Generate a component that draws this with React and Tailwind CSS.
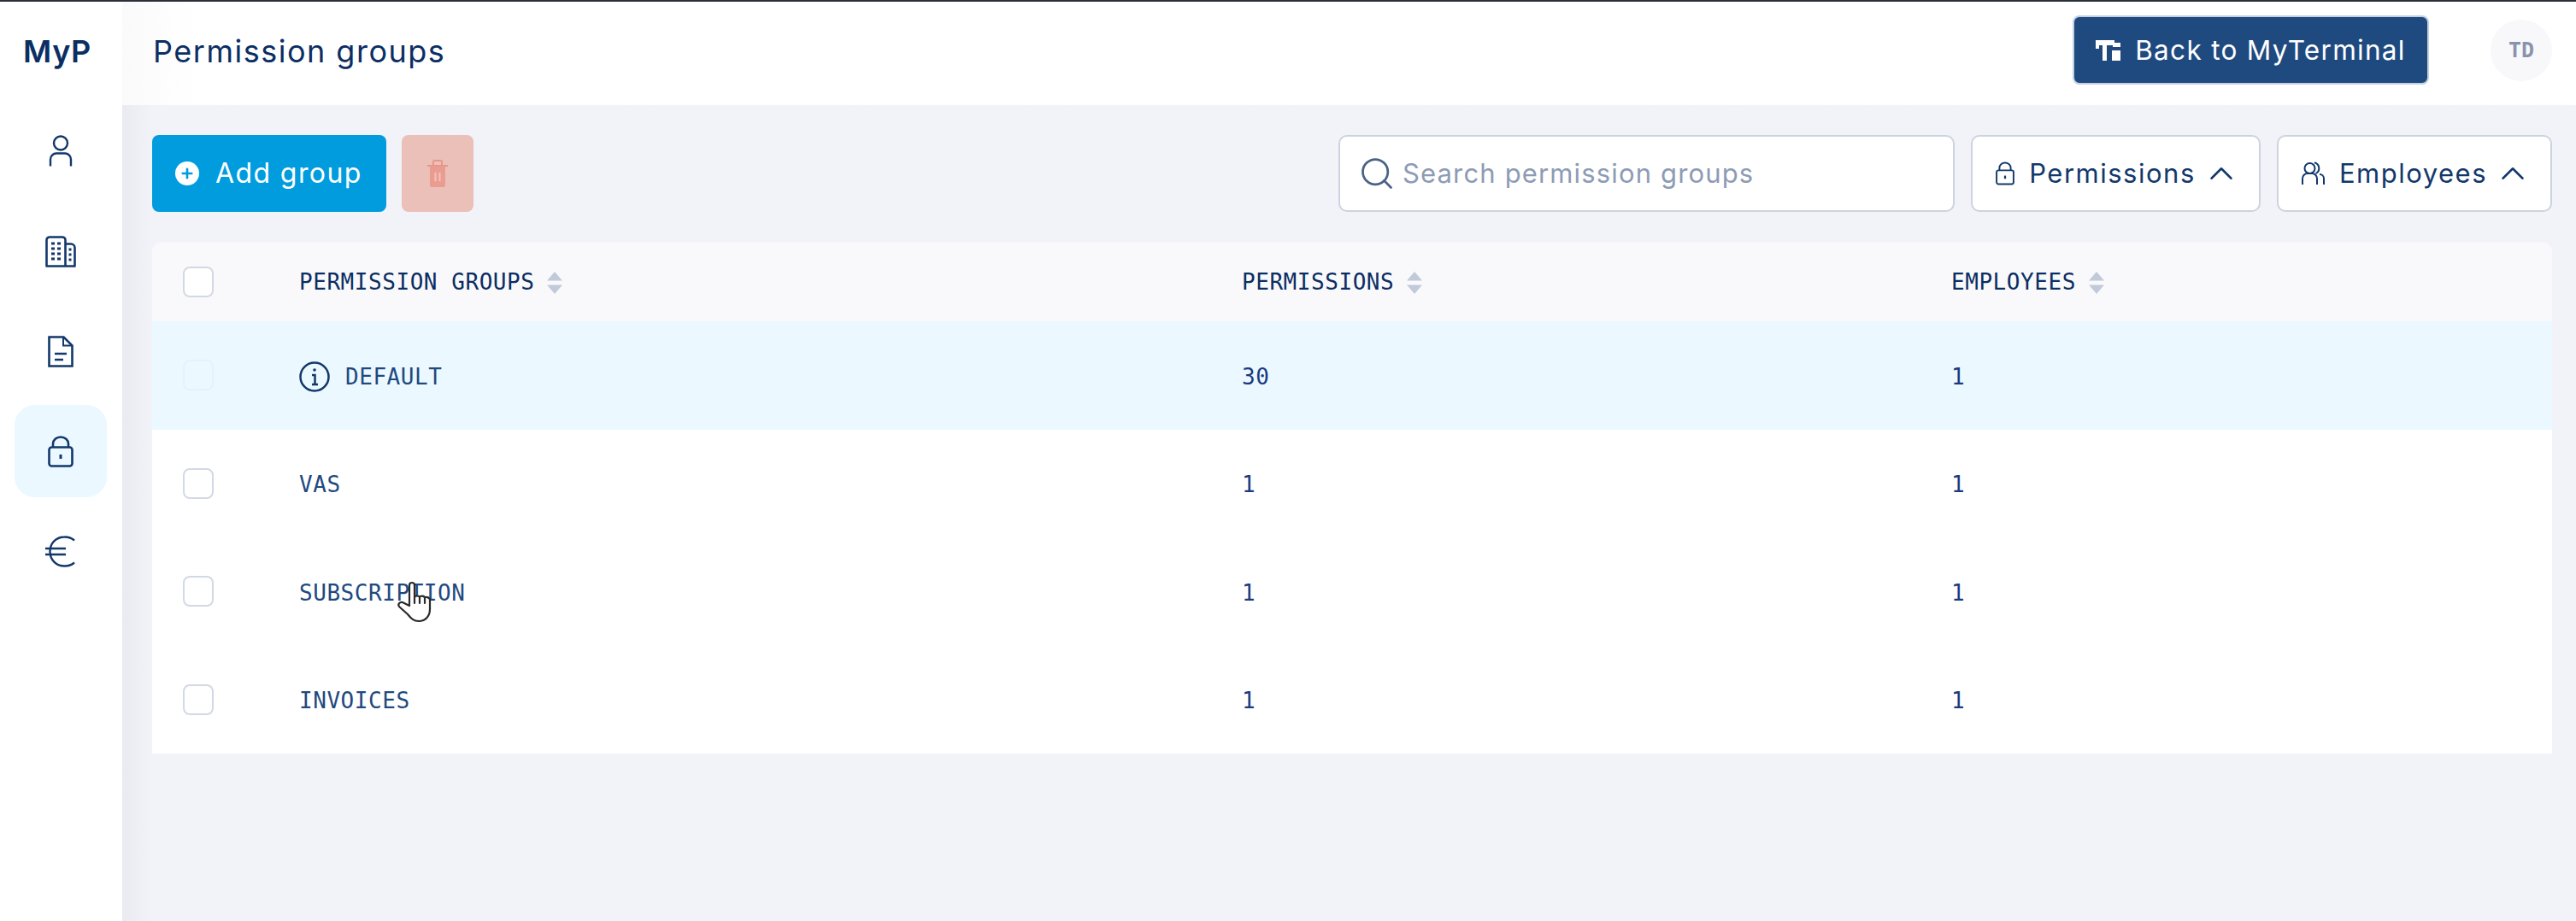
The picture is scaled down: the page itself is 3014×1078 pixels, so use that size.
import React from "react";
import { Search, ChevronUp, Plus } from "lucide-react";

const Sans = "font-['Inter','Noto_Sans',sans-serif]";
const Mono = "font-['DejaVu_Sans_Mono','Liberation_Mono',monospace]";

const S = { fill: "none", stroke: "currentColor" };

const UserIcon = () => (
  <svg width="28" height="38" viewBox="0 0 28 38" {...S} strokeWidth="2.400">
    <circle cx="14" cy="9.500" r="8" />
    <path d="M2 36.500v-8a7 7 0 0 1 7-7h10a7 7 0 0 1 7 7v8" />
  </svg>
);
const BuildingIcon = () => (
  <svg width="36" height="37" viewBox="0 0 36 37" {...S} strokeWidth="2.600">
    <path d="M1.500 35.500V5a3.500 3.500 0 0 1 3.500-3.500h15a3.500 3.500 0 0 1 3.500 3.500v30.500M23.500 9.500H30a4.500 4.500 0 0 1 4.500 4.500v21.500M0.500 35.500h35" />
    <path d="M7 9h4M14 9h4M7 15h4M14 15h4M7 21h4M14 21h4M7 27h4M14 27h4M27.500 16h3M27.500 22h3M27.500 28h3" strokeWidth="3" />
  </svg>
);
const DocIcon = () => (
  <svg width="30" height="37" viewBox="0 0 30 37" {...S} strokeWidth="2.600">
    <path d="M1.500 1.500h17l10 10v24h-27z" />
    <path d="M18 1.500v10h10" strokeWidth="2" />
    <path d="M8 21h14M8 28h10" />
  </svg>
);
const LockIcon = ({ w = 30, h = 37, sw = 2.600 }) => (
  <svg width={w} height={h} viewBox="0 0 30 37" {...S} strokeWidth={sw}>
    <rect x="1.500" y="13.500" width="27" height="22" rx="3" />
    <path d="M6 13.500V9.500a9 8 0 0 1 18 0v4" />
    <path d="M15 22v5" strokeWidth="3" />
  </svg>
);
const EuroIcon = () => (
  <svg width="36" height="37" viewBox="0 0 36 37" {...S} strokeWidth="2.400">
    <path d="M34 5.500A17 17 0 0 0 22.500 1.500C12.500 1.500 5.500 9 5.500 18.500S12.500 35.500 22.500 35.500A17 17 0 0 0 34 31.500" />
    <path d="M0 15h24M0 22h24" />
  </svg>
);
const PeopleIcon = () => (
  <svg width="27" height="28" viewBox="0 0 27 28" {...S} strokeWidth="2">
    <circle cx="9.500" cy="8" r="6" />
    <path d="M15 1.200a7 7 0 0 1 1.500 13" />
    <path d="M1 27v-7a6 6 0 0 1 6-6h5a6 6 0 0 1 6 6v7M21 15a5 5 0 0 1 5 5v7" />
  </svg>
);
const TerminalLogo = () => (
  <svg width="29" height="27" viewBox="0 0 29 27" fill="currentColor">
    <path d="M0 2h22v6h-9v18H8V8H4v4H0z" />
    <path d="M20 5h9v5h-9zM19 14h10v12H19z" />
  </svg>
);
const TrashIcon = () => (
  <svg width="24" height="32" viewBox="0 0 24 32">
    <path d="M7 6V2.500A1.500 1.500 0 0 1 8.500 1h7A1.500 1.500 0 0 1 17 2.500V6" fill="none" stroke="#e8968a" strokeWidth="2" />
    <path d="M0 6h24v2H0z" fill="#e8968a" />
    <path d="M3 8h18v22a2 2 0 0 1-2 2H5a2 2 0 0 1-2-2z" fill="#ea9c90" />
    <path d="M9.500 15v10M14.500 15v10" stroke="#f3c4ba" strokeWidth="2" />
  </svg>
);
const InfoIcon = () => (
  <svg width="36" height="36" viewBox="0 0 36 36" fill="none" stroke="#12386b" strokeWidth="2.500">
    <circle cx="18" cy="18" r="16.500" />
    <path d="M15 16h3.500v11M15 27h7" />
    <circle cx="18" cy="10" r="1.800" fill="#12386b" stroke="none" />
  </svg>
);
const SortArrows = () => (
  <svg width="18" height="26" viewBox="0 0 18 26" fill="#c0cad8" className="shrink-0">
    <path d="M9 0l9 10.500H0zM0 15.500h18L9 26z" />
  </svg>
);
const HandCursor = () => (
  <svg width="42" height="50" viewBox="0 0 42 50" fill="#fff" stroke="#2a2a2a" strokeWidth="2.200" strokeLinejoin="round" strokeLinecap="round">
    <path d="M16 30V6a3 3 0 0 1 6 0v14c0-2 6-2 6 0 0-2 6-2 6 1 0-2 6-1 6 2v11c0 8-5 14-13 14-6 0-9-3-13-8l-10-9c-2-3 1-6 4-5z" />
    <path d="M22 20v7M28 20v7M34 21v6" fill="none" />
  </svg>
);

const NavItem = ({ active, children }) => (
  <div className={`w-[108px] h-[108px] rounded-[24px] flex items-center justify-center text-[#12386b] ${active ? "bg-[#ebf8ff]" : ""}`}>
    {children}
  </div>
);

const Pill = ({ w, icon, label }) => (
  <div className={`${w} h-[90px] bg-white border-2 border-[#ccd3e0] rounded-[10px] flex items-center justify-center gap-[11px] text-[#12386b]`}>
    {icon}
    <span className="text-[31px] tracking-[1.500px] pl-[6px] pr-[2px]">{label}</span>
    <ChevronUp size={46} strokeWidth={1.300} className="text-[#12386b] -mx-[6px]" />
  </div>
);

const cols = "grid grid-cols-[172px_1103px_830px_1fr] items-center";

const Check = ({ faint }) => (
  <div className={`ml-[36px] w-[36px] h-[36px] rounded-[8px] border-2 ${faint ? "border-[#e4f2f9] bg-[#ebf8ff]" : "border-[#d3d9e4] bg-white"}`} />
);

const Row = ({ name, perms, bg = "bg-white", faint, icon, cursor }) => (
  <div className={`${cols} h-[126.500px] ${bg} ${Mono} text-[26px] tracking-[0.550px] text-[#1f4a80]`}>
    <Check faint={faint} />
    <div className="flex items-center gap-[18px] relative pt-[4px]">
      {icon}
      <span>{name}</span>
      {cursor && <div className="absolute left-[113px] top-[8px]"><HandCursor /></div>}
    </div>
    <span className="text-[#1a3b80] pt-[4px]">{perms}</span>
    <span className="text-[#1a3b80] pt-[4px]">1</span>
  </div>
);

const Th = ({ label }) => (
  <div className="flex items-center gap-[15px] pt-[2px]">
    <span>{label}</span>
    <SortArrows />
  </div>
);

export default function App() {
  return (
    <div className={`w-[3014px] h-[1078px] flex flex-col overflow-hidden bg-white border-t-2 border-[#2b3036] ${Sans}`}>
      <div className="flex flex-1 min-h-0">
        <aside className="w-[143px] shrink-0 bg-white flex flex-col items-center pr-[2px]">
          <div className="h-[119px] pb-[4px] pr-[7px] flex items-center text-[36px] font-semibold text-[#0b2e63] tracking-[0.600px]">MyP</div>
          <div className="flex flex-col items-center gap-[9px] mt-[2px]">
            <NavItem><UserIcon /></NavItem>
            <NavItem><BuildingIcon /></NavItem>
            <NavItem><DocIcon /></NavItem>
            <NavItem active><LockIcon /></NavItem>
            <NavItem><EuroIcon /></NavItem>
          </div>
        </aside>
        <main className="flex-1 flex flex-col min-w-0">
          <header className="h-[121px] shrink-0 bg-gradient-to-r from-[#fafafa] via-white via-[3%] to-white flex items-center pl-[36px] pr-[28px] pb-[8px]">
            <h1 className="text-[36px] font-normal text-[#0b2e63] tracking-[1.500px] pt-[2px]">Permission groups</h1>
            <div className="ml-auto flex items-center gap-[72px]">
              <button className="w-[417px] h-[81px] rounded-[8px] bg-[#1f4a80] border-2 border-[#c3d0e0] text-white flex items-center justify-center gap-[17px]">
                <TerminalLogo />
                <span className="text-[31.500px] tracking-[1.300px]">Back to MyTerminal</span>
              </button>
              <div className={`w-[72px] h-[72px] rounded-full bg-[#f8f8fb] flex items-center justify-center text-[#8a93ad] font-bold text-[25px] ${Mono}`}>TD</div>
            </div>
          </header>
          <div className="flex-1 bg-gradient-to-r from-[#e9ebf0] to-[#f1f3f8] to-[35px] pl-[35px] pr-[28px] pt-[35px]">
            <div className="flex items-center h-[90px]">
              <button className="w-[274px] h-[90px] rounded-[8px] bg-[#009cde] text-white flex items-center pl-[27px] gap-[19px]">
                <span className="w-[28px] h-[28px] rounded-full bg-white flex items-center justify-center">
                  <Plus size={18} strokeWidth={3.500} className="text-[#009cde]" />
                </span>
                <span className="text-[32px] tracking-[1.400px]">Add group</span>
              </button>
              <div className="ml-[18px] w-[84px] h-[90px] rounded-[8px] bg-[#ebc0b8] flex items-center justify-center">
                <TrashIcon />
              </div>
              <div className="ml-auto flex items-center gap-[19px]">
                <div className="w-[721px] h-[90px] bg-white border-2 border-[#ccd3e0] rounded-[10px] flex items-center pl-[21px] gap-[8px]">
                  <Search size={44} strokeWidth={1.500} className="text-[#4a6285]" />
                  <span className="text-[31px] text-[#8d9bb5] tracking-[1.150px]">Search permission groups</span>
                </div>
                <Pill w="w-[339px]" icon={<LockIcon w={22} h={28} sw={2.600} />} label="Permissions" />
                <Pill w="w-[322px]" icon={<PeopleIcon />} label="Employees" />
              </div>
            </div>
            <div className="mt-[35px] rounded-t-[12px] overflow-hidden">
              <div className={`${cols} h-[93px] bg-[#f9f9fc] ${Mono} text-[26px] tracking-[0.550px] text-[#0b2e63]`}>
                <Check />
                <Th label="PERMISSION GROUPS" />
                <Th label="PERMISSIONS" />
                <Th label="EMPLOYEES" />
              </div>
              <Row name="DEFAULT" perms="30" bg="bg-[#ebf8ff]" faint icon={<InfoIcon />} />
              <Row name="VAS" perms="1" />
              <Row name="SUBSCRIPTION" perms="1" cursor />
              <Row name="INVOICES" perms="1" />
            </div>
          </div>
        </main>
      </div>
    </div>
  );
}
